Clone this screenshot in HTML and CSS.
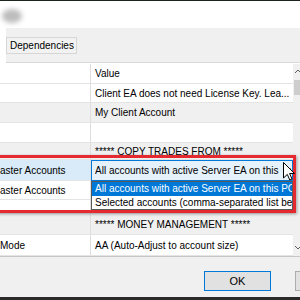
FILE: index.html
```html
<!DOCTYPE html>
<html>
<head>
<meta charset="utf-8">
<link rel="stylesheet" href="styles.css">
</head>
<body>
<div class="window">
  <div class="topstrip"></div>
  <div class="title"><div class="blob"></div></div>
  <div class="tabs">
    <div class="tab-sel"></div>
    <div class="tab">Dependencies</div>
  </div>
  <div class="panel">
    <div class="grid">
      <div class="cell k"></div><div class="cell v">Value</div>
      <div class="cell k"></div><div class="cell v">Client EA does not need License Key. Lea...</div>
      <div class="cell k grey"></div><div class="cell v grey">My Client Account</div>
      <div class="cell k"></div><div class="cell v"></div>
      <div class="cell k grey"></div><div class="cell v grey">***** COPY TRADES FROM *****</div>
      <div class="cell k hl">aster Accounts</div><div class="cell v"></div>
      <div class="cell k">aster Accounts</div><div class="cell v"></div>
      <div class="cell k"></div><div class="cell v"></div>
      <div class="cell k grey"></div><div class="cell v grey">***** MONEY MANAGEMENT *****</div>
      <div class="cell k"> Mode</div><div class="cell v">AA (Auto-Adjust to account size)</div>
    </div>
    <div class="scroll">
      <div class="sb-btn"><svg width="7" height="16" viewBox="0 0 7 16"><path d="M2 9 L5 6 L8 9" fill="none" stroke="#606060" stroke-width="1"/></svg></div>
      <div class="thumb"></div>
      <div class="track"></div>
      <div class="sb-btn"><svg width="7" height="16" viewBox="0 0 7 16"><path d="M2 6 L5 9 L8 6" fill="none" stroke="#606060" stroke-width="1"/></svg></div>
    </div>
  </div>
  <div class="footer">
    <div class="btn def">OK</div>
    <div class="btn">Cancel</div>
  </div>
  <div class="bottomstrip"></div>

  <div class="redbox"></div>
  <div class="combo">
    <span class="combo-text">All accounts with active Server EA on this</span>
    <svg class="arrow" width="8" height="5" viewBox="0 0 8 5"><path d="M0.5 0.5 L4 4 L7.5 0.5" fill="none" stroke="#333" stroke-width="1"/></svg>
  </div>
  <div class="dropdown">
    <div class="opt sel">All accounts with active Server EA on this PC</div>
    <div class="opt">Selected accounts (comma-separated list below)</div>
  </div>
  <svg class="cursor" width="12" height="19" viewBox="0 0 12 19"><path d="M0.5 0.5 L0.5 16 L4.3 12.4 L6.8 18 L9 17 L6.6 11.5 L11.5 11.5 Z" fill="#fff" stroke="#000" stroke-width="1" stroke-linejoin="round"/></svg>
</div>
</body>
</html>
```
FILE: styles.css
```css
* { box-sizing: border-box; }
html, body { margin: 0; padding: 0; }
body {
  width: 300px; height: 300px; overflow: hidden;
  font-family: "Liberation Sans", Arial, sans-serif;
  font-size: 10px; color: #000; background: #fff;
}
.window { position: relative; width: 300px; height: 300px; display: flex; flex-direction: column; overflow: hidden; }
.topstrip { height: 1px; background: #1d231d; flex: none; }
.title { height: 27px; background: #fff; padding: 8px 0 0 2px; flex: none; }
.blob { width: 20px; height: 14px; border-radius: 50%; background: #bdbdbd; filter: blur(2.5px); }
.tabs { height: 35px; background: #f0f0f0; display: flex; align-items: flex-start; border-bottom: 1px solid #d9d9d9; flex: none; }
.tab-sel { width: 6px; align-self: stretch; background: #fff; margin-bottom: -1px; }
.tab { margin-top: 9px; width: 71px; height: 17px; border: 1px solid #d6d6d6; background: #f2f2f2; line-height: 15px; padding-left: 3px; }
.panel { flex: none; display: flex; padding-top: 1px; border-bottom: 1px solid #c6c6c6; background: #fff; }
.grid {
  width: 293px; display: grid; grid-template-columns: 91px 1fr;
  grid-template-rows: 20px 19px 20px 20px 17px 21px 19px 14px 21px 21px;
}
.cell { border-bottom: 1px solid #e4e4e4; white-space: nowrap; overflow: hidden; display: flex; align-items: center; padding-left: 4px; }
.cell.k { border-right: 1px solid #dedede; padding-left: 0; }
.grey { background: #f0f0f0; }
.hl { background: #d9ebf9; }
.scroll { width: 7px; display: flex; flex-direction: column; background: #f0f0f0; }
.sb-btn { height: 16px; flex: none; }
.sb-btn svg { display: block; }
.thumb { height: 15px; background: #cdcdcd; margin-left: 1px; flex: none; }
.track { flex: 1; }
.footer { flex: 1; background: #f0f0f0; display: flex; gap: 24px; padding: 14px 0 0 204px; }
.btn { flex: none; width: 67px; height: 20px; border: 1px solid #adadad; background: #e1e1e1; display: flex; align-items: center; justify-content: center; font-size: 11px; }
.btn.def { border-color: #0078d7; }
.bottomstrip { height: 3px; background: #2a2a2a; flex: none; }

.redbox { position: absolute; left: -3px; top: 155px; width: 299px; height: 58px; border: 3px solid #e42a2f; box-shadow: 1px 1px 3px rgba(0,0,0,.35); }
.combo { position: absolute; left: 91px; top: 160px; width: 202px; height: 21px; border: 1px solid #0078d7; background: #e5f1fb; padding-left: 3px; display: flex; align-items: center; }
.combo-text { width: 186px; white-space: nowrap; overflow: hidden; }
.arrow { margin-left: 2px; }
.dropdown { position: absolute; left: 91px; top: 181px; width: 202px; height: 29px; border: 1px solid #5a5a5a; background: #fff; }
.opt { height: 13px; line-height: 13px; padding-left: 3px; white-space: nowrap; overflow: hidden; }
.opt.sel { background: #0078d7; color: #fff; height: 14px; line-height: 14px; }
.cursor { position: absolute; left: 283px; top: 162px; }
```
